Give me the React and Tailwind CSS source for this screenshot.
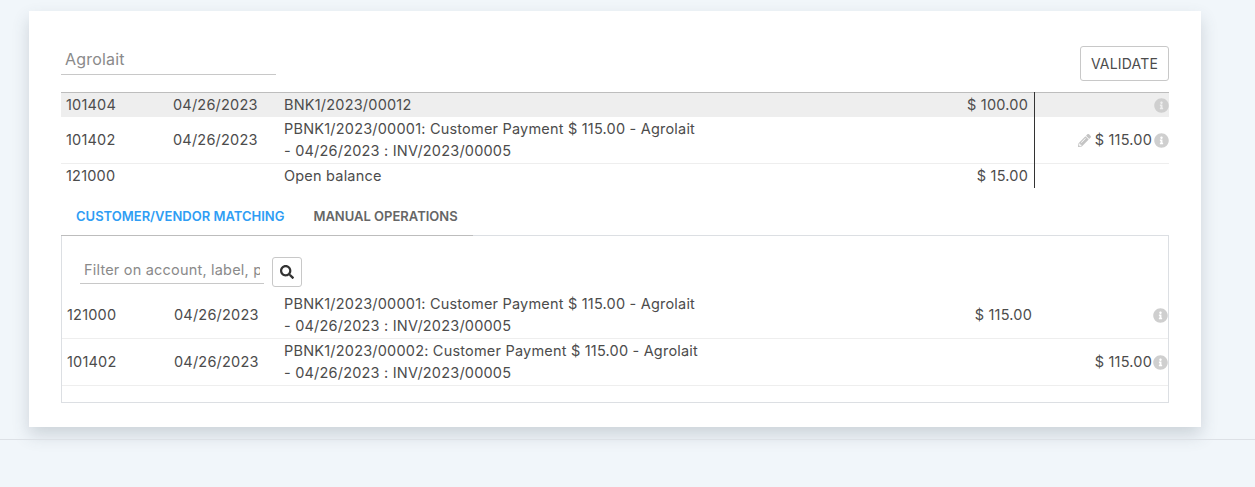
import { FaInfoCircle, FaPencilAlt, FaSearch } from "react-icons/fa"

function Info() {
  return <FaInfoCircle className="h-[15px] w-[15px] text-[#cfcfcf] shrink-0" />
}

function Label({ lines }) {
  return (
    <div className="leading-[22px]">
      {lines.map((l) => (
        <div key={l}>{l}</div>
      ))}
    </div>
  )
}

export default function App() {
  return (
    <div className="h-[487px] overflow-hidden bg-[#f1f6fa] pt-[11px] font-['Inter',sans-serif] text-[14.5px] tracking-[0.2px] text-[#4c4c4c]">
      <div className="mx-[29px] w-[1172px] h-[416px] bg-white px-[32px] shadow-[0_8px_16px_rgba(60,75,90,0.2)]">
        <div className="flex items-start justify-between pt-[35px] h-[81px]">
          <input
            placeholder="Agrolait"
            className="w-[215px] h-[29px] border-b border-[#c8c8c8] pl-[4px] pb-[3px] text-[16px] outline-none placeholder:text-[#8a8a8a]"
          />
          <button className="h-[35px] w-[89px] rounded-[3px] border border-[#c8c8c8] text-[14px] text-[#4c4c4c]">VALIDATE</button>
        </div>
        <div className="relative border-t border-[#bdbdbd]">
          <div className="grid grid-cols-[107px_111px_1fr_135px] h-[24px] items-center bg-[#eeeeee]">
            <div className="pl-[5px]">101404</div>
            <div className="pl-[5px]">04/26/2023</div>
            <div className="pl-[5px] flex justify-between">
              <span>BNK1/2023/00012</span>
              <span className="pr-[6px]">$ 100.00</span>
            </div>
            <div className="flex justify-end">
              <Info />
            </div>
          </div>
          <div className="grid grid-cols-[107px_111px_1fr_135px] h-[47px] items-center border-b border-[#eeeeee]">
            <div className="pl-[5px]">101402</div>
            <div className="pl-[5px]">04/26/2023</div>
            <div className="pl-[5px] pb-[1px]">
              <Label lines={["PBNK1/2023/00001: Customer Payment $ 115.00 - Agrolait", "- 04/26/2023 : INV/2023/00005"]} />
            </div>
            <div className="flex justify-end items-center gap-[2px]">
              <FaPencilAlt className="h-[13px] w-[13px] mr-[2px] text-[#c4c4c4]" />
              <span>$ 115.00</span>
              <Info />
            </div>
          </div>
          <div className="grid grid-cols-[107px_111px_1fr_135px] h-[24px] items-center">
            <div className="pl-[5px]">121000</div>
            <div />
            <div className="pl-[5px] flex justify-between">
              <span>Open balance</span>
              <span className="pr-[6px]">$ 15.00</span>
            </div>
            <div />
          </div>
          {/* line between debit and credit */}
          <div className="absolute right-[134px] top-[-1px] bottom-0 w-px bg-[#333]" />
        </div>
        <div className="relative mt-[12px] -mb-px flex w-[412px] h-[36px] border-b border-[#bdbdbd] pl-[15px] pb-[2px] gap-[29px] items-center text-[13px] tracking-normal font-semibold">
          <span className="text-[#2f9df4]">CUSTOMER/VENDOR MATCHING</span>
          <span className="text-[#666]">MANUAL OPERATIONS</span>
        </div>
        <div className="h-[168px] border border-[#dcdfe3]">
          <div className="flex items-start pl-[18px] pt-[21px] h-[56px]">
            <input
              placeholder="Filter on account, label, partner"
              className="w-[184px] h-[27px] border-b border-[#c8c8c8] px-[4px] pb-[2px] outline-none placeholder:text-[#8a8a8a]"
            />
            <button className="ml-[8px] flex h-[30px] w-[30px] items-center justify-center rounded-[3px] border border-[#c8c8c8] text-[#333]">
              <FaSearch className="h-[14px] w-[14px]" />
            </button>
          </div>
          <div className="grid grid-cols-[107px_111px_1fr_120px_16px] h-[47px] items-center border-b border-[#eeeeee]">
            <div className="pl-[5px]">121000</div>
            <div className="pl-[5px]">04/26/2023</div>
            <div className="pl-[4px] flex items-center justify-between">
              <Label lines={["PBNK1/2023/00001: Customer Payment $ 115.00 - Agrolait", "- 04/26/2023 : INV/2023/00005"]} />
              <span>$ 115.00</span>
            </div>
            <div />
            <div className="flex justify-end"><Info /></div>
          </div>
          <div className="grid grid-cols-[107px_111px_1fr_120px_16px] h-[47px] items-center border-b border-[#eeeeee]">
            <div className="pl-[5px]">101402</div>
            <div className="pl-[5px]">04/26/2023</div>
            <div className="pl-[4px]">
              <Label lines={["PBNK1/2023/00002: Customer Payment $ 115.00 - Agrolait", "- 04/26/2023 : INV/2023/00005"]} />
            </div>
            <div className="text-right">$ 115.00</div>
            <div className="flex justify-end"><Info /></div>
          </div>
        </div>
      </div>
      <div className="mt-[12px] border-t border-[#dde1e6]" />
    </div>
  )
}
